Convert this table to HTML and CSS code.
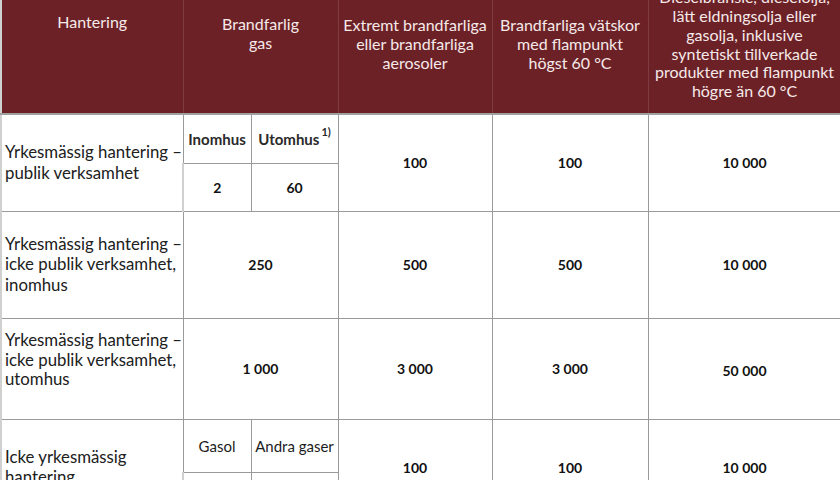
FILE: index.html
```html
<!DOCTYPE html>
<html lang="sv">
<head>
<meta charset="utf-8">
<title>Hantering</title>
<link rel="stylesheet" href="styles.css">
</head>
<body>
<table class="limits">
  <colgroup>
    <col class="c-label">
    <col class="c-gas-a">
    <col class="c-gas-b">
    <col class="c-aero">
    <col class="c-liq">
    <col class="c-diesel">
  </colgroup>
  <thead>
    <tr class="head-row">
      <th class="h-top h-hant">Hantering</th>
      <th class="h-top h-gas" colspan="2">Brandfarlig<br>gas</th>
      <th class="h-mid">Extremt brandfarliga<br>eller brandfarliga<br>aerosoler</th>
      <th class="h-mid">Brandfarliga vätskor<br>med flampunkt<br>högst 60 °C</th>
      <th class="h-mid">Dieselbränsle, dieselolja,<br>lätt eldningsolja eller<br>gasolja, inklusive<br>syntetiskt tillverkade<br>produkter med flampunkt<br>högre än 60 °C</th>
    </tr>
  </thead>
  <tbody>
    <tr class="r1a">
      <td class="label" rowspan="2">Yrkesmässig hantering –<br>publik verksamhet</td>
      <td class="sub">Inomhus</td>
      <td class="sub">Utomhus<sup class="note">1)</sup></td>
      <td class="num" rowspan="2">100</td>
      <td class="num" rowspan="2">100</td>
      <td class="num" rowspan="2">10 000</td>
    </tr>
    <tr class="r1b">
      <td class="num">2</td>
      <td class="num">60</td>
    </tr>
    <tr class="r2">
      <td class="label">Yrkesmässig hantering –<br>icke publik verksamhet,<br>inomhus</td>
      <td class="num" colspan="2">250</td>
      <td class="num">500</td>
      <td class="num">500</td>
      <td class="num">10 000</td>
    </tr>
    <tr class="r3">
      <td class="label label-high">Yrkesmässig hantering –<br>icke publik verksamhet,<br>utomhus</td>
      <td class="num" colspan="2">1 000</td>
      <td class="num">3 000</td>
      <td class="num">3 000</td>
      <td class="num num-low">50 000</td>
    </tr>
    <tr class="r4a">
      <td class="label" rowspan="2">Icke yrkesmässig<br>hantering</td>
      <td class="sub sub-plain">Gasol</td>
      <td class="sub sub-plain">Andra gaser</td>
      <td class="num" rowspan="2">100</td>
      <td class="num" rowspan="2">100</td>
      <td class="num" rowspan="2">10 000</td>
    </tr>
    <tr class="r4b">
      <td class="num">60</td>
      <td class="num">2</td>
    </tr>
  </tbody>
</table>
</body>
</html>
```

FILE: styles.css
```css
html, body {
  margin: 0;
  padding: 0;
  background: #ffffff;
}

body {
  overflow: hidden;
  width: 840px;
  height: 480px;
}

.limits {
  width: 840px;
  margin-top: -24px;
  border-collapse: collapse;
  table-layout: fixed;
  font-family: Lato, "Open Sans", sans-serif;
  color: #1c1c1c;
}

.c-label { width: 182px; }
.c-gas-a { width: 68px; }
.c-gas-b { width: 87px; }
.c-aero { width: 154px; }
.c-liq { width: 156px; }
.c-diesel { width: 193px; }

.head-row {
  height: 138px;
}

.head-row th {
  background: #6c2127;
  color: #f6e9e9;
  font-weight: 400;
  font-size: 16px;
  line-height: 18.8px;
  text-align: center;
  padding: 0;
  white-space: nowrap;
  border-left: 1px solid #7d3c40;
  border-right: 1px solid #7d3c40;
  border-bottom: 2px solid #a0a0a0;
}

.head-row th:first-child {
  border-left: 2px solid #d0d0d0;
}

.h-top {
  vertical-align: top;
}

.head-row .h-hant {
  padding-top: 37px;
}

.head-row .h-gas {
  padding-top: 39px;
}

.h-mid {
  vertical-align: middle;
}

td {
  border: 1px solid #9a9a9a;
  text-align: center;
  vertical-align: middle;
  padding: 0 2px;
}

td.label {
  text-align: left;
  padding: 0 0 0 3px;
  font-size: 16.8px;
  line-height: 20.5px;
  font-weight: 400;
  color: #202020;
  white-space: nowrap;
}

tbody tr td:first-child {
  border-left: 2px solid #d0d0d0;
}

td.label-high {
  padding-bottom: 18px;
  line-height: 19.5px;
}

td.num {
  font-weight: 700;
  font-size: 14px;
  color: #111111;
}

td.num-low {
  padding-top: 4px;
}

td.sub {
  font-size: 15px;
  font-weight: 700;
  color: #2a2a2a;
  white-space: nowrap;
}

td.sub-plain {
  font-weight: 400;
  font-size: 15px;
  color: #1c1c1c;
}

.note {
  font-size: 11px;
  position: relative;
  top: -3px;
  vertical-align: super;
  line-height: 0;
  margin-left: 2px;
}

.r1a { height: 49px; }
.r1b { height: 48px; }
.r2 { height: 107px; }
.r3 { height: 101px; }
.r4a { height: 53px; }
.r4b { height: 43px; }
```
